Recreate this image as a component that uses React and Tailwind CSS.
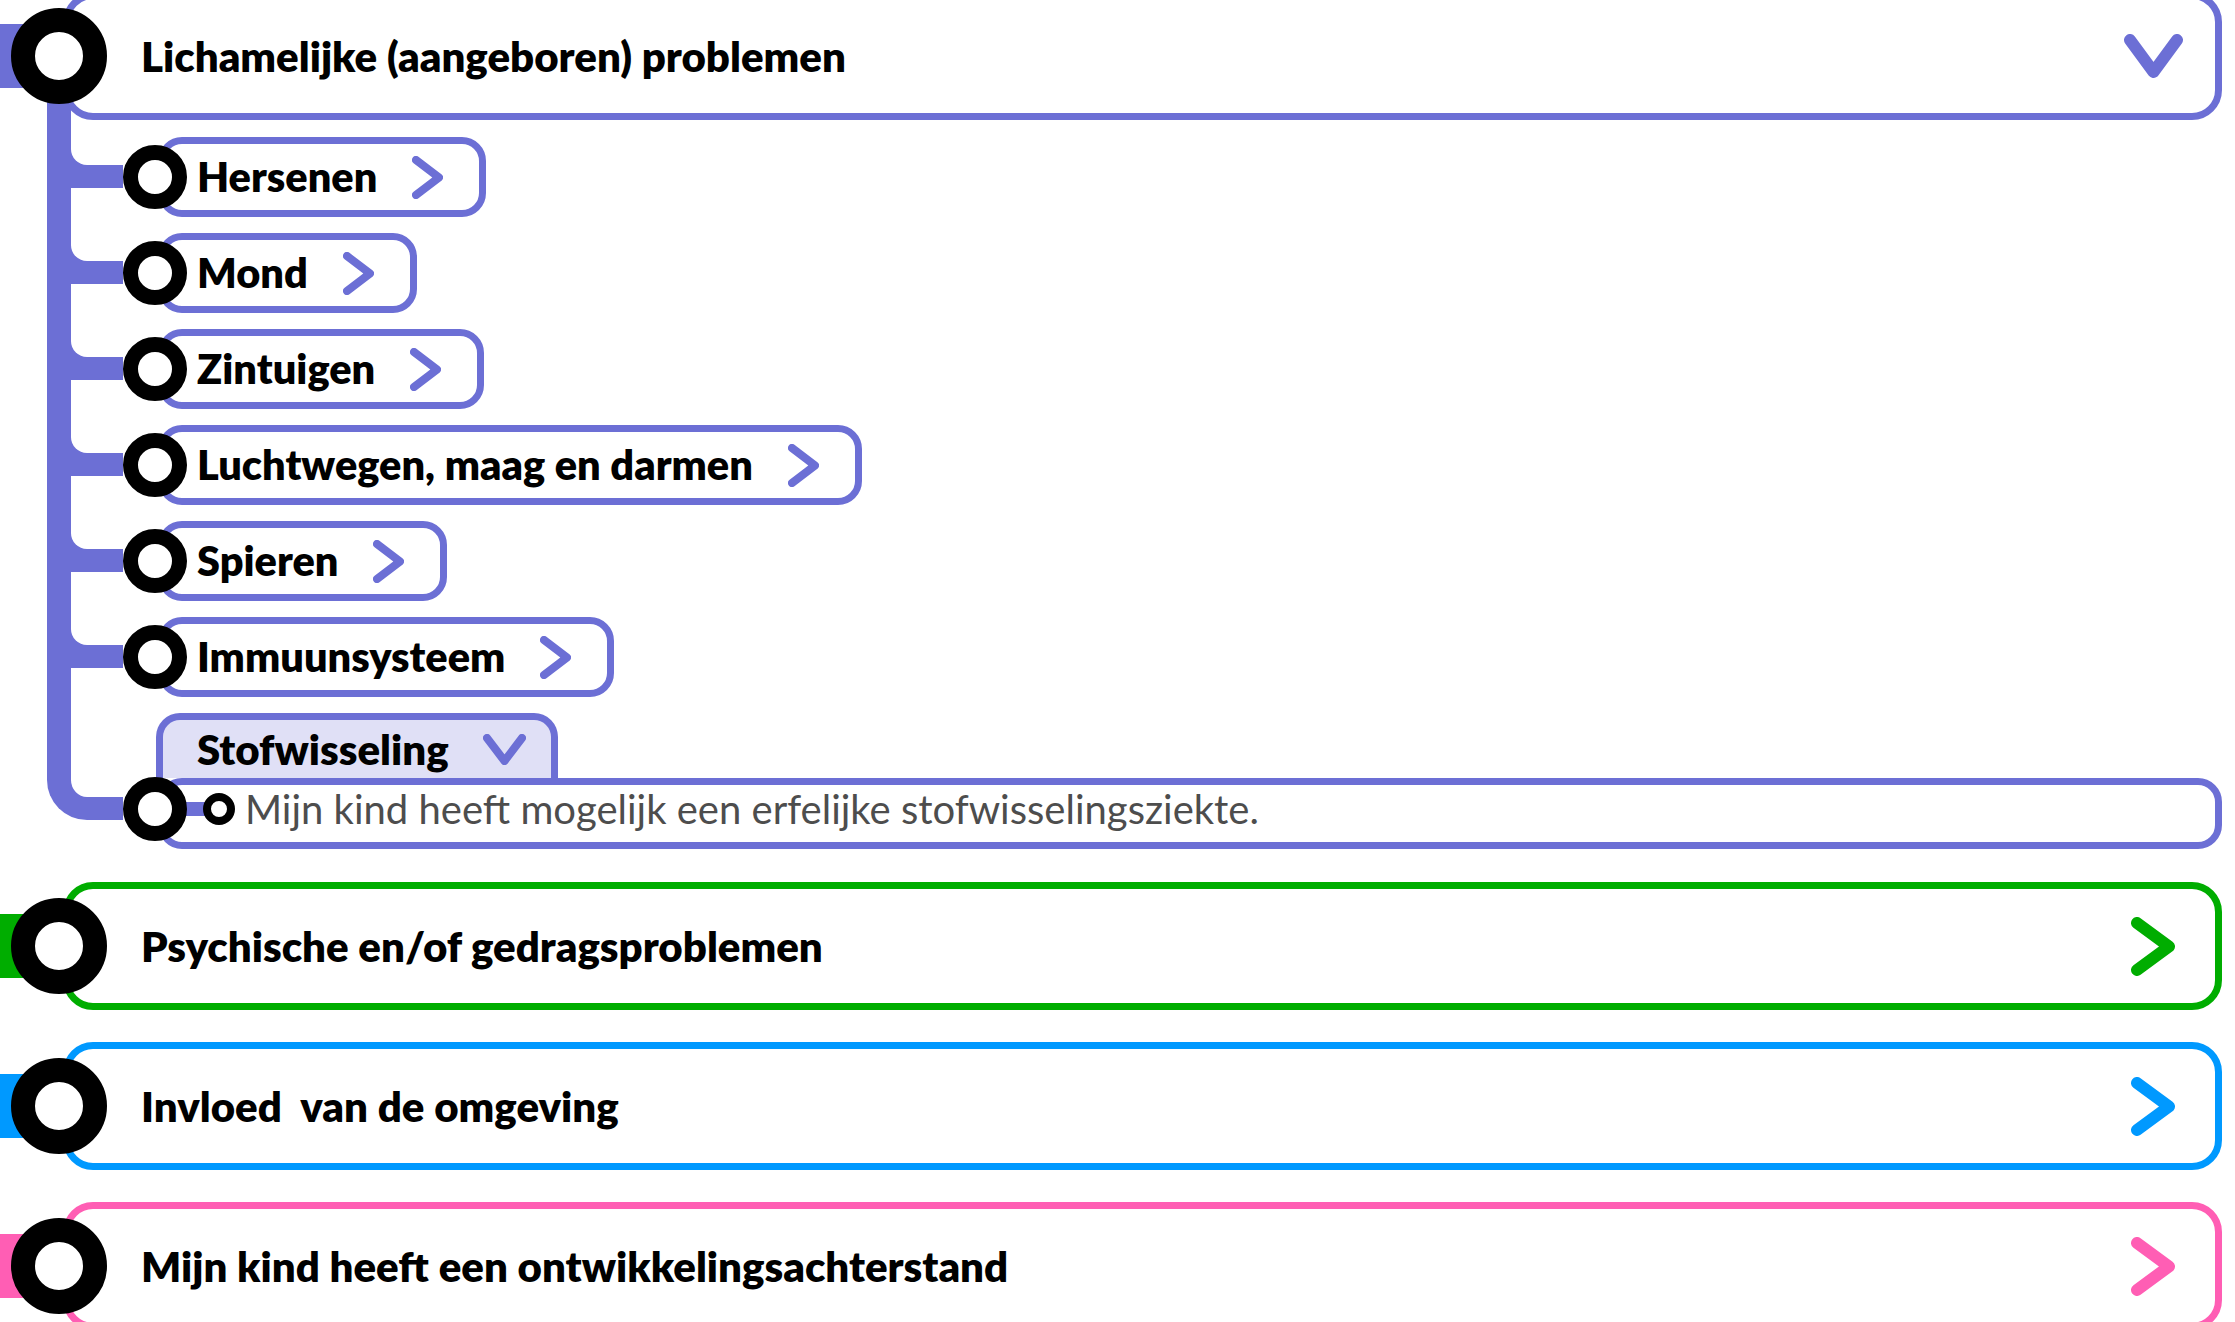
import React from 'react';

const Chevron = ({ dir = 'right', w, h, sw, color }) => {
  const s = sw / 2;
  const pts =
    dir === 'right'
      ? `${s},${s} ${w - s},${h / 2} ${s},${h - s}`
      : `${s},${s} ${w / 2},${h - s} ${w - s},${s}`;
  return (
    <svg width={w} height={h} viewBox={`0 0 ${w} ${h}`} className="shrink-0">
      <polyline points={pts} fill="none" stroke={color} strokeWidth={sw} strokeLinecap="round" strokeLinejoin="round" />
    </svg>
  );
};

const MainRow = ({ label, bar, border, color, open, className = '' }) => (
  <div className={`relative flex h-[128px] items-center ${className}`}>
    <div className={`h-[64px] w-[40px] shrink-0 ${bar}`} />
    <div className="absolute left-[11px] top-1/2 z-10 h-[96px] w-[96px] -translate-y-1/2 rounded-full border-[24px] border-black bg-white" />
    <div
      className={`ml-[23px] flex h-full flex-1 items-center justify-between rounded-[30px] border-[7px] bg-white pl-[71px] ${border} ${
        open ? 'pr-[32px]' : 'pr-[40px]'
      }`}
    >
      <span className="whitespace-pre text-[42px] font-extrabold leading-none text-black">{label}</span>
      {open ? <Chevron dir="down" w={59} h={44} sw={12} color={color} /> : <Chevron w={44} h={59} sw={12} color={color} />}
    </div>
  </div>
);

const SubRow = ({ label }) => (
  <div className="flex h-[96px] items-center">
    <div className="ml-[47px] flex w-[76px] shrink-0 flex-col self-stretch border-l-[24px] border-[#6c6fd5]">
      <div className="h-[59px] bg-[#6c6fd5]">
        <div className="h-[36px] rounded-bl-[16px] bg-white" />
      </div>
    </div>
    <div className="relative z-10 h-[64px] w-[64px] shrink-0 rounded-full border-[15px] border-black bg-white" />
    <div className="-ml-[29px] flex h-[80px] items-center gap-[35px] rounded-[24px] border-[7px] border-[#6c6fd5] bg-white pl-[32px] pr-[36px]">
      <span className="text-[41.5px] font-extrabold leading-none text-black">{label}</span>
      <Chevron w={31} h={43} sw={8} color="#6c6fd5" />
    </div>
  </div>
);

const subs = ['Hersenen', 'Mond', 'Zintuigen', 'Luchtwegen, maag en darmen', 'Spieren', 'Immuunsysteem'];

export default function App() {
  return (
    <div className="w-full bg-white pr-[13px] font-['Lato','Liberation_Sans',sans-serif]">
      <MainRow
        className="-mt-[8px]"
        label="Lichamelijke (aangeboren) problemen"
        bar="bg-[#6c6fd5]"
        border="border-[#6c6fd5]"
        color="#6c6fd5"
        open
      />

      <div className="relative -mt-[20px]">
        <div className="ml-[47px] h-[29px] w-[24px] bg-[#6c6fd5]" />
        {subs.map((s) => (
          <SubRow key={s} label={s} />
        ))}

        <div className="flex h-[73px] items-end">
          <div className="ml-[47px] w-[24px] self-stretch bg-[#6c6fd5]" />
          <div className="ml-[85px] flex h-[65px] items-center gap-[34px] rounded-t-[24px] border-x-[7px] border-t-[7px] border-[#6c6fd5] bg-[#e0e0f6] pl-[34px] pr-[25px]">
            <span className="text-[42px] font-extrabold leading-none text-black">Stofwisseling</span>
            <Chevron dir="down" w={43} h={31} sw={8} color="#6c6fd5" />
          </div>
        </div>

        <div className="flex h-[71px]">
          <div className="ml-[47px] w-[76px] shrink-0">
            <div className="h-[42px] rounded-bl-[40px] border-b-[23px] border-l-[24px] border-[#6c6fd5]" />
          </div>
          <div className="relative z-10 -mt-[1px] h-[64px] w-[64px] shrink-0 rounded-full border-[15px] border-black bg-white" />
          <div className="-ml-[29px] flex h-[71px] flex-1 items-center rounded-[24px] border-[7px] border-[#6c6fd5] bg-white pb-[9px]">
            <div className="h-[14px] w-[40px] shrink-0 bg-[#6c6fd5]" />
            <div className="-ml-[2px] h-[32px] w-[32px] shrink-0 rounded-full border-[8px] border-black bg-white" />
            <span className="ml-[10px] text-[40px] leading-none text-[#4d4d4d]">
              Mijn kind heeft mogelijk een erfelijke stofwisselingsziekte.
            </span>
          </div>
        </div>
      </div>

      <MainRow
        className="mt-[33px]"
        label="Psychische en/of gedragsproblemen"
        bar="bg-[#00ad00]"
        border="border-[#00ad00]"
        color="#00ad00"
      />
      <MainRow
        className="mt-[32px]"
        label="Invloed  van de omgeving"
        bar="bg-[#0099ff]"
        border="border-[#0099ff]"
        color="#0099ff"
      />
      <MainRow
        className="mt-[32px]"
        label="Mijn kind heeft een ontwikkelingsachterstand"
        bar="bg-[#ff5eb4]"
        border="border-[#ff5eb4]"
        color="#ff5eb4"
      />
    </div>
  );
}
